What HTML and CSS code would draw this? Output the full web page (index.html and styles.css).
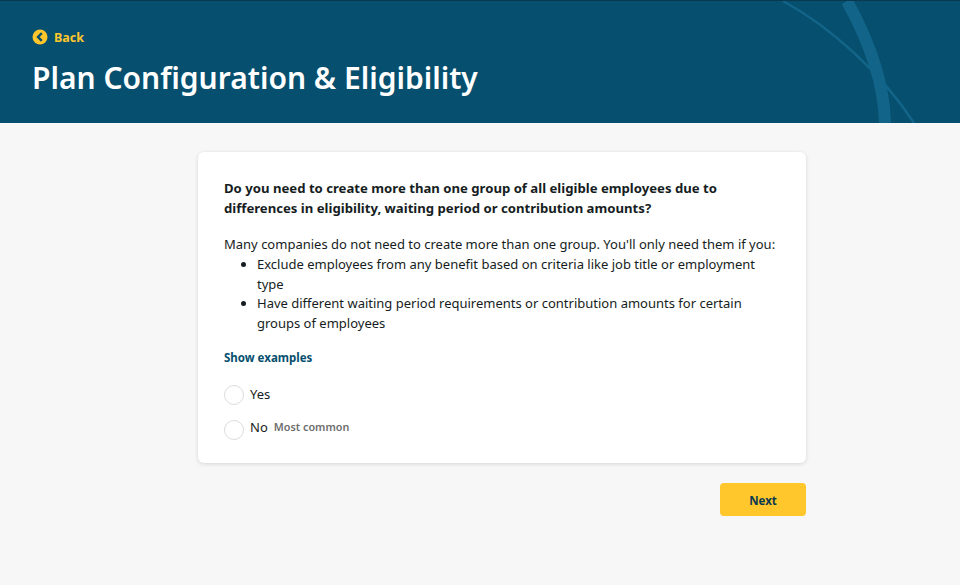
FILE: index.html
```html
<!DOCTYPE html>
<html lang="en">
<head>
  <meta charset="UTF-8" />
  <title>Plan Configuration &amp; Eligibility</title>
  <meta name="viewport" content="width=device-width, initial-scale=1.0" />
  <link rel="stylesheet" href="styles.css">
</head>
<body>

<header class="banner">
  <svg class="arcs" width="960" height="122" viewBox="0 0 960 122" aria-hidden="true">
    <path d="M783 0C830 26 880 70 914 122" fill="none" stroke="#126488" stroke-width="2.5" />
    <path d="M847 0C868 38 884 80 885 122" fill="none" stroke="#126488" stroke-width="12" />
  </svg>
  <a class="back" href="#">
    <svg width="16" height="16" viewBox="0 0 16 16" aria-hidden="true">
      <circle cx="8" cy="8" r="7.5" fill="#ffc72c" />
      <path d="M9.8 4.2L6 8l3.8 3.8" fill="none" stroke="#064f6e" stroke-width="2.4" />
    </svg>
    Back
  </a>
  <h1>Plan Configuration &amp; Eligibility</h1>
</header>

<main class="content">
  <section class="card">
    <h2>Do you need to create more than one group of all eligible employees due to differences in eligibility, waiting period or contribution amounts?</h2>
    <p>Many companies do not need to create more than one group. You'll only need them if you:</p>
    <ul>
      <li>Exclude employees from any benefit based on criteria like job title or employment type</li>
      <li>Have different waiting period requirements or contribution amounts for certain groups of employees</li>
    </ul>
    <a class="examples" href="#">Show examples</a>
    <div class="options">
      <label class="option"><span class="radio"></span>Yes</label>
      <label class="option"><span class="radio"></span>No <small>Most common</small></label>
    </div>
  </section>
  <div class="actions">
    <button class="next">Next</button>
  </div>
</main>

</body>
</html>
```

FILE: styles.css
```css
* { margin: 0; padding: 0; box-sizing: border-box; }

html {
  background: #fff;
}

body {
  font-family: 'Noto Sans', sans-serif;
  background: #f7f7f7;
  color: #161d22;
  height: 585px;
  overflow: hidden;
}

.banner {
  position: relative;
  height: 123px;
  padding: 28px 32px 0;
  background: #064f6e;
  border-top: 1px solid #0b3a50;
  overflow: hidden;
}

.arcs {
  position: absolute;
  top: 0;
  left: 0;
}

.back {
  position: relative;
  display: flex;
  align-items: center;
  gap: 6px;
  height: 16px;
  font-size: 12.5px;
  font-weight: 700;
  color: #ffc72c;
  text-decoration: none;
}

h1 {
  position: relative;
  margin-top: 11px;
  font-size: 30px;
  line-height: 44px;
  font-weight: 600;
  color: #fff;
}

.content {
  width: 608px;
  margin: 29px auto 0 198px;
}

.card {
  height: 311px;
  padding: 26px 26px 0;
  background: #fff;
  border-radius: 6px;
  box-shadow: 0 1px 4px rgba(0, 0, 0, 0.14);
  font-size: 13px;
  line-height: 20px;
}

h2 {
  font-size: 13.15px;
  line-height: 20px;
  font-weight: 700;
  margin-bottom: 16px;
}

ul {
  margin: 0 0 14px 33px;
  padding-top: 1px;
  line-height: 19.7px;
}

.examples {
  display: block;
  font-size: 11.5px;
  font-weight: 700;
  color: #064f6e;
  text-decoration: none;
}

.options {
  display: flex;
  flex-direction: column;
  gap: 12px;
  margin-top: 16px;
}

.option {
  display: flex;
  gap: 6px;
  height: 21px;
}

.radio {
  width: 20px;
  height: 20px;
  margin-top: 1px;
  border: 1px solid #dcdcdc;
  border-radius: 50%;
  background: #fff;
}

.option:last-child .radio {
  margin-top: 3px;
}

small {
  font-size: 10.8px;
  font-weight: 600;
  color: #6e6e6e;
}

.actions {
  display: flex;
  justify-content: flex-end;
  margin-top: 20px;
}

.next {
  width: 86px;
  height: 33px;
  border: none;
  border-radius: 4px;
  background: #ffc72c;
  color: #0b3a50;
  font-family: inherit;
  font-size: 11.5px;
  font-weight: 700;
  padding-top: 2px;
}
```
